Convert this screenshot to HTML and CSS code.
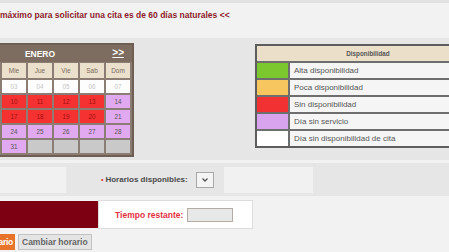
FILE: index.html
```html
<!DOCTYPE html>
<html lang="es">
<head>
<meta charset="utf-8">
<title>Cita previa</title>
<link rel="stylesheet" href="styles.css">
</head>
<body>
<div class="topbar"></div>
<p class="notice">máximo para solicitar una cita es de 60 días naturales &lt;&lt;</p>
<div class="main">
  <div class="calendar">
    <div class="cal-head"><span class="month">ENERO</span><a class="next">&gt;&gt;</a></div>
    <div class="cal-grid">
      <div class="dh">Lun</div><div class="dh">Mar</div><div class="dh">Mie</div><div class="dh">Jue</div><div class="dh">Vie</div><div class="dh">Sab</div><div class="dh">Dom</div>
      <div class="d w">01</div><div class="d w">02</div><div class="d w">03</div><div class="d w">04</div><div class="d w">05</div><div class="d w">06</div><div class="d w">07</div>
      <div class="d r">08</div><div class="d r">09</div><div class="d r">10</div><div class="d r">11</div><div class="d r">12</div><div class="d r">13</div><div class="d p">14</div>
      <div class="d r">15</div><div class="d r">16</div><div class="d r">17</div><div class="d r">18</div><div class="d r">19</div><div class="d r">20</div><div class="d p">21</div>
      <div class="d p">22</div><div class="d p">23</div><div class="d p">24</div><div class="d p">25</div><div class="d p">26</div><div class="d p">27</div><div class="d p">28</div>
      <div class="d p">29</div><div class="d p">30</div><div class="d p">31</div><div class="d g"></div><div class="d g"></div><div class="d g"></div><div class="d g"></div>
    </div>
  </div>
  <div class="legend">
    <div class="lg-head">Disponibilidad</div>
    <div class="lg-row"><span class="sw green"></span><span class="lg-text">Alta disponibilidad</span></div>
    <div class="lg-row"><span class="sw yellow"></span><span class="lg-text">Poca disponibilidad</span></div>
    <div class="lg-row"><span class="sw red"></span><span class="lg-text">Sin disponibilidad</span></div>
    <div class="lg-row"><span class="sw purple"></span><span class="lg-text">Día sin servicio</span></div>
    <div class="lg-row"><span class="sw white"></span><span class="lg-text">Día sin disponibilidad de cita</span></div>
  </div>
</div>
<div class="gap"></div>
<div class="formrow">
  <div class="leftbox"></div>
  <label class="hlabel"><span class="bullet">•</span>Horarios disponibles:</label>
  <div class="select"><svg width="8" height="6" viewBox="0 0 8 6"><path d="M1.5 1.5 L4 4 L6.5 1.5" fill="none" stroke="#555" stroke-width="1.3"/></svg></div>
  <div class="rightbox"></div>
</div>
<div class="timerrow">
  <div class="redbar"></div>
  <div class="timerbox"><span class="tlabel">Tiempo restante:</span><span class="tinput"></span></div>
</div>
<div class="buttons">
  <div class="clip"><button class="btn-orange">Reservar horario</button></div>
  <button class="btn-grey">Cambiar horario</button>
</div>
</body>
</html>
```
FILE: styles.css
```css
html, body {
  margin: 0;
  padding: 0;
}
body {
  width: 449px;
  height: 252px;
  overflow: hidden;
  background: #f2f2f2;
  font-family: "Liberation Sans", Arial, sans-serif;
}
.topbar {
  height: 3px;
  background: #e2e2e2;
}
.notice {
  margin: 0 0 11px 0;
  height: 24px;
  line-height: 24px;
  font-size: 8.5px;
  font-weight: bold;
  color: #8c1c2c;
  white-space: nowrap;
}
.main {
  background: #e6e6e6;
  height: 117px;
  padding-top: 5px;
  display: flex;
  align-items: flex-start;
}
.calendar {
  margin-left: -54px;
  border: 2px solid #6e5e53;
  background: #7d6c60;
  flex: none;
}
.cal-head {
  height: 17px;
  position: relative;
  display: flex;
  align-items: center;
  justify-content: center;
  color: #fff;
}
.month {
  font-size: 8.5px;
  font-weight: bold;
}
.next {
  position: absolute;
  right: 8px;
  top: 2px;
  font-size: 10px;
  font-weight: bold;
  text-decoration: underline;
  color: #fff;
}
.cal-grid {
  display: grid;
  grid-template-columns: repeat(7, 24px);
  grid-template-rows: 15px repeat(5, 13px);
  gap: 2px;
  padding: 1px 2px 2px 2px;
  background: #8b7d73;
}
.dh {
  background: #ebe0cc;
  color: #7a6a5c;
  font-size: 6.5px;
  display: flex;
  align-items: center;
  justify-content: center;
}
.d {
  font-size: 6.3px;
  display: flex;
  align-items: center;
  justify-content: center;
}
.d.w { background: #fdfdfd; color: #c4c4c4; }
.d.r { background: #f53232; color: #9c1010; }
.d.p { background: #e1aaf0; color: #555; }
.d.g { background: #c9c9c9; }
.legend {
  margin-left: 121px;
  margin-top: 1px;
  width: 222px;
  flex: none;
  border: 2px solid #5d5d5d;
  background: #6e6e6e;
}
.lg-head {
  height: 15px;
  background: #ebdfca;
  color: #555;
  font-size: 6.3px;
  font-weight: bold;
  display: flex;
  align-items: center;
  justify-content: center;
}
.lg-row {
  display: flex;
  height: 15px;
  margin-top: 2px;
  gap: 2px;
}
.sw {
  width: 31px;
  flex: none;
}
.sw.green { background: #7cc62e; }
.sw.yellow { background: #f7c65e; }
.sw.red { background: #f23232; }
.sw.purple { background: #d8a4ee; }
.sw.white { background: #ffffff; }
.lg-text {
  flex: 1;
  background: #f5f5f5;
  color: #555;
  font-size: 8px;
  display: flex;
  align-items: center;
  padding-left: 4px;
}
.gap {
  height: 3px;
}
.formrow {
  background: #e6e6e6;
  height: 33px;
  display: flex;
  align-items: center;
}
.leftbox {
  width: 66px;
  height: 26px;
  background: #f1f1f1;
}
.hlabel {
  margin-left: 35px;
  font-size: 8px;
  font-weight: bold;
  color: #4a4a4a;
}
.bullet {
  color: #d33;
  margin-right: 2px;
  font-size: 7px;
}
.select {
  margin-left: 8px;
  width: 16px;
  height: 14px;
  border: 1px solid #a8a8a8;
  background: #f4f4f4;
  display: flex;
  align-items: center;
  justify-content: center;
}
.rightbox {
  margin-left: 10px;
  width: 89px;
  height: 26px;
  background: #f1f1f1;
}
.timerrow {
  margin-top: 4px;
  display: flex;
  align-items: center;
  height: 29px;
}
.redbar {
  width: 98px;
  height: 27px;
  background: #7d0012;
}
.timerbox {
  width: 155px;
  height: 29px;
  border: 1px solid #dcdcdc;
  background: #fff;
  display: flex;
  align-items: center;
  padding-left: 16px;
  box-sizing: border-box;
}
.tlabel {
  color: #e2303c;
  font-size: 8.5px;
  font-weight: bold;
}
.tinput {
  margin-left: 4px;
  width: 46px;
  height: 14px;
  box-sizing: border-box;
  border: 1px solid #b3aca4;
  background: #e8e8e8;
}
.buttons {
  margin-top: 5px;
  display: flex;
  align-items: center;
  gap: 3px;
}
.clip {
  width: 15px;
  overflow: hidden;
  display: flex;
  justify-content: flex-end;
}
.btn-orange, .btn-grey {
  flex: none;
  height: 16px;
  padding: 0 3px;
  font-family: "Liberation Sans", Arial, sans-serif;
  font-size: 8.5px;
  font-weight: bold;
  white-space: nowrap;
  box-sizing: border-box;
}
.btn-orange {
  background: #e8742c;
  color: #fff;
  border: 1px solid #e8742c;
  padding-right: 1px;
  letter-spacing: -0.3px;
}
.btn-grey {
  background: #e4e4e4;
  color: #666;
  border: 1px solid #c2c2c2;
}
```
